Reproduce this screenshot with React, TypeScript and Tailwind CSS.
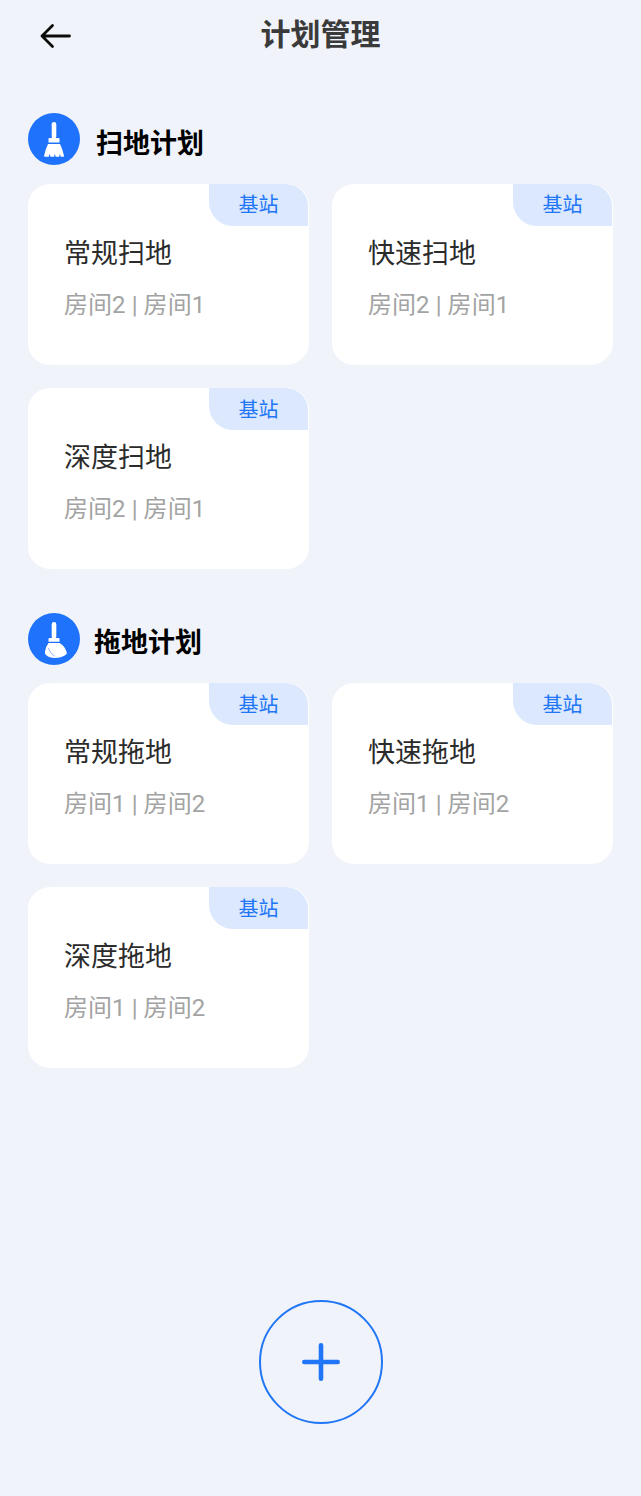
const FONT = "font-['Roboto','Noto_Sans_CJK_SC',sans-serif]";

function SweepIcon() {
  return (
    <svg width="52" height="52" viewBox="0 0 52 52" className="shrink-0">
      <circle cx="26" cy="26" r="26" fill="#1e72fb" />
      <rect x="23.700" y="9" width="4.600" height="17" rx="2.300" fill="#fff" />
      <path d="M20.500 26 Q20.500 25 21.500 25 H30.500 Q31.500 25 31.500 26 V29.600 H20.500 Z" fill="#fff" />
      <path d="M20 31 H32 Q34.500 36 36 42.500 Q36.200 43.800 35 43.800 H32.800 L31.800 40.800 L31.300 43.800 H27.700 L26.800 40.800 L26.200 43.800 H22.500 L21.700 40.800 L20.800 43.800 H17.200 Q15.800 43.800 16.100 42.500 Q17.500 36 20 31 Z" fill="#fff" />
    </svg>
  );
}

function MopIcon() {
  return (
    <svg width="52" height="52" viewBox="0 0 52 52" className="shrink-0">
      <circle cx="26" cy="26" r="26" fill="#1e72fb" />
      <rect x="23.700" y="9" width="4.600" height="17" rx="2.300" fill="#fff" />
      <path d="M20.500 26 Q20.500 25 21.500 25 H30.500 Q31.500 25 31.500 26 V28.800 H20.500 Z" fill="#fff" />
      <path d="M20.500 30 H31.500 Q37 33 38.800 39.500 Q39 41 37.500 42 Q33 45 27 45 Q21 45 18 42 Q16.500 40.500 17 38.500 Q18 33 20.500 30 Z" fill="#fff" />
      <path d="M20.500 35.500 Q21.500 40 26.500 43" fill="none" stroke="#8db8fb" strokeWidth="1" strokeLinecap="round" />
    </svg>
  );
}

function PlanCard({ title, rooms }: { title: string; rooms: string }) {
  return (
    <div className="relative h-[181px] overflow-hidden rounded-[22px] bg-white pl-[36px] pt-[52px]">
      <div className="absolute right-px top-0 flex h-[41.500px] w-[99px] items-center justify-center rounded-bl-[24px] rounded-tr-[22px] bg-[#dbe8fd] pt-[1px] text-[20px] leading-[40px] text-[#2076f6]">
        基站
      </div>
      <div className="text-[27px] leading-[36px] text-[#2b2b2b]">{title}</div>
      <div className="mt-[15px] text-[24px] leading-[36px] tracking-[0.06px] text-[#a3a3a3]">{rooms}</div>
    </div>
  );
}

function Section({
  icon,
  title,
  titleGap,
  cardsGap,
  plans,
  rooms,
}: {
  icon: React.ReactNode;
  title: string;
  titleGap: string;
  cardsGap: string;
  plans: string[];
  rooms: string;
}) {
  return (
    <section>
      <div className={`flex h-[52px] items-center ${titleGap}`}>
        {icon}
        <h2 className="mt-[9px] text-[27px] font-bold leading-[40px] text-black">{title}</h2>
      </div>
      <div className={`${cardsGap} grid grid-cols-[281px_281px] gap-x-[23px]`}>
        {plans.map((p) => (
          <PlanCard key={p} title={p} rooms={rooms} />
        ))}
      </div>
    </section>
  );
}

export default function App() {
  return (
    <div className={`${FONT} flex h-[1496px] w-[641px] flex-col bg-[#f0f3fa]`}>
      <header className="relative flex h-[70px] shrink-0 items-center justify-center">
        <button className="absolute left-[40px] top-[23px]" aria-label="返回">
          <svg width="31" height="26" viewBox="0 0 31 26" className="block">
            <path d="M29.500 13 H2 M12.500 2.500 L2 13 L12.500 23.500" fill="none" stroke="#0c0c0c" strokeWidth="2.800" strokeLinecap="round" strokeLinejoin="round" />
          </svg>
        </button>
        <h1 className="text-[30px] font-bold leading-[40px] text-[#3a3a3a]">计划管理</h1>
      </header>
      <main className="mt-[43px] flex flex-col gap-[43.600px] pl-[28px]">
        <Section icon={<SweepIcon />} title="扫地计划" titleGap="gap-[16px]" cardsGap="mt-[19px] gap-y-[23.400px]" plans={["常规扫地", "快速扫地", "深度扫地"]} rooms="房间2 | 房间1" />
        <Section icon={<MopIcon />} title="拖地计划" titleGap="gap-[14px]" cardsGap="mt-[18.300px] gap-y-[23px]" plans={["常规拖地", "快速拖地", "深度拖地"]} rooms="房间1 | 房间2" />
      </main>
      <div className="mt-[232.200px] flex justify-center">
        <button className="flex h-[124px] w-[124px] items-center justify-center rounded-full border-2 border-[#2076f6]" aria-label="添加">
          <svg width="38" height="38" viewBox="0 0 38 38" className="block">
            <path d="M19 2.300 V35.700 M2.300 19 H35.700" fill="none" stroke="#2076f6" strokeWidth="4.600" strokeLinecap="round" />
          </svg>
        </button>
      </div>
    </div>
  );
}
